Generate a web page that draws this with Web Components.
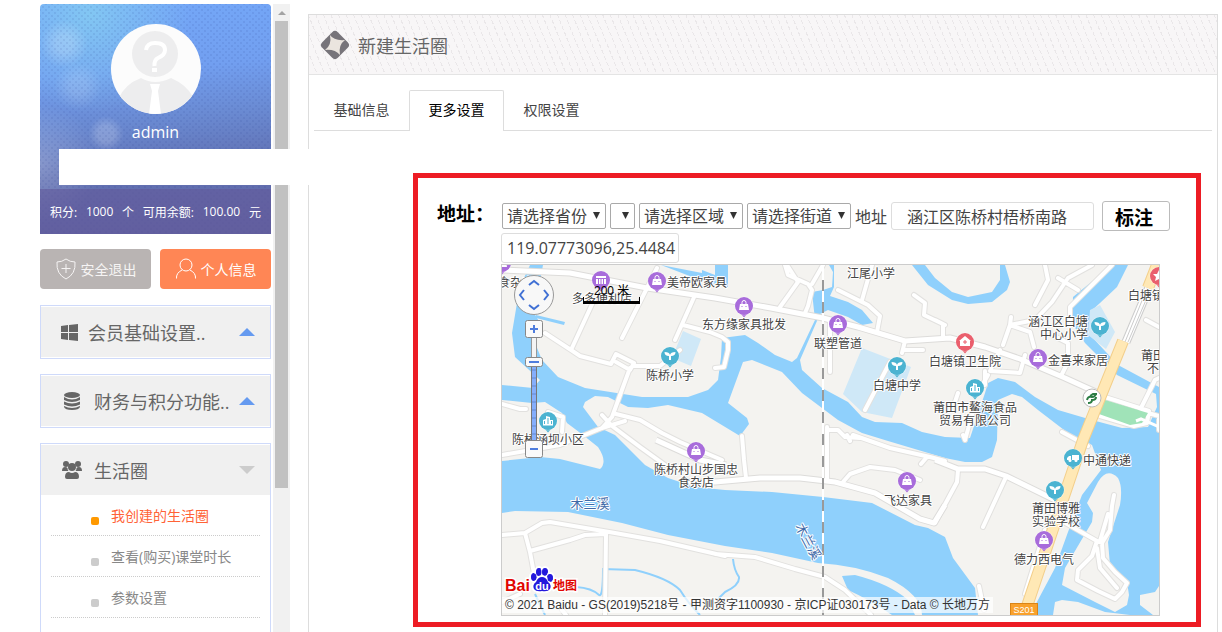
<!DOCTYPE html>
<html lang="zh-CN">
<head>
<meta charset="utf-8">
<title>新建生活圈</title>
<style>
html,body{margin:0;background:#fff}
body{font-family:"Open Sans","Noto Sans CJK SC",sans-serif;color:#333}
</style>
</head>
<body>
<app-shell>
  <side-bar slot="side">
    <profile-card name="admin" points="1000" balance="100.00"></profile-card>
    <quick-actions></quick-actions>
    <menu-panel label="会员基础设置.." icon="windows"></menu-panel>
    <menu-panel label="财务与积分功能.." icon="stack"></menu-panel>
    <menu-panel label="生活圈" icon="users" open>
      <menu-item current>我创建的生活圈</menu-item>
      <menu-item>查看(购买)课堂时长</menu-item>
      <menu-item>参数设置</menu-item>
    </menu-panel>
  </side-bar>
  <scroll-track slot="track"></scroll-track>
  <page-card heading="新建生活圈">
    <tab-strip></tab-strip>
    <address-form></address-form>
  </page-card>
</app-shell>

<script>
const define = (name, html, setup) => {
  const t = document.createElement('template');
  t.innerHTML = '<style>:host,*{box-sizing:border-box}</style>' + html.trim();
  customElements.define(name, class extends HTMLElement {
    constructor() {
      super();
      this.attachShadow({mode: 'open'}).append(t.content.cloneNode(true));
    }
    connectedCallback() { if (setup) setup(this, this.shadowRoot); }
  });
};

define('app-shell', `
<style>
:host{display:flex;position:relative;height:100vh;overflow:hidden;padding:0 4px 0 40px}
.side{flex:none;display:flex;padding-top:4px;gap:2px}
main{flex:1;min-width:0;margin-left:18px;padding-top:14px;display:flex}
::slotted(page-card){flex:1;min-width:0}
.blank{position:absolute;left:59px;top:149px;width:251px;height:36px;background:#fff}
</style>
<div class="side"><slot name="side"></slot><slot name="track"></slot></div>
<main><slot></slot></main>
<div class="blank"></div>`);

define('side-bar', `
<style>
:host{display:flex;flex-direction:column;width:231px;gap:15px}
::slotted(menu-panel){flex:none}
::slotted(menu-panel[open]){flex:1 0 auto}
::slotted(quick-actions){margin-bottom:1px}
</style><slot></slot>`);

define('profile-card', `
<style>
:host{display:flex;flex-direction:column;align-items:center;height:230px;border-radius:4px 4px 0 0;padding-top:20px;color:#fff;
background:
radial-gradient(circle,rgba(40,60,140,.1) 1px,transparent 1px) 0 0/6px 6px,
radial-gradient(circle,rgba(40,60,140,.1) 1px,transparent 1px) 3px 3px/6px 6px,
radial-gradient(circle at 24px 40px,rgba(255,255,255,.2) 0 8px,transparent 24px),
radial-gradient(circle at 38px 82px,rgba(255,255,255,.13) 0 8px,transparent 24px),
radial-gradient(circle at 66px 130px,rgba(255,255,255,.2) 0 8px,transparent 18px),
radial-gradient(circle at 0 160px,rgba(255,255,255,.22) 0,transparent 60px),
radial-gradient(circle at 50px 10px,rgba(140,220,240,.6) 0,transparent 100px),
linear-gradient(175deg,#6265a4 0,#6272b4 30%,#6a8ad2 50%,#729ff0 70%,#74a8f8 100%);
background:
radial-gradient(circle,rgba(40,60,140,.1) 1px,transparent 1px) 0 0/6px 6px,
radial-gradient(circle,rgba(40,60,140,.1) 1px,transparent 1px) 3px 3px/6px 6px,
radial-gradient(circle at 24px 40px,rgba(255,255,255,.2) 0 8px,transparent 24px),
radial-gradient(circle at 38px 82px,rgba(255,255,255,.13) 0 8px,transparent 24px),
radial-gradient(circle at 66px 130px,rgba(255,255,255,.2) 0 8px,transparent 18px),
radial-gradient(circle at 0 160px,rgba(255,255,255,.22) 0,transparent 60px),
radial-gradient(circle at 50px 10px,rgba(140,220,240,.6) 0,transparent 100px),
linear-gradient(175deg,#74a8f8 0,#729ff0 30%,#6a8ad2 50%,#6272b4 70%,#6265a4 100%)}
svg{display:block;flex:none;border-radius:50%}
.name{font-size:16px;line-height:36px}
.stats{margin-top:auto;width:100%;height:45px;display:flex;justify-content:space-between;align-items:center;padding:0 10px;background:rgba(98,90,155,.6);font-size:12px;white-space:nowrap}
</style>
<svg width="90" height="90" viewBox="0 0 90 90"><rect width="90" height="90" fill="#fcfcfc"/>
<circle cx="44" cy="30" r="23" fill="#ededee"/><path d="M8 74Q14 60 30 54Q44 62 60 54Q76 61 82 73L82 90H8z" fill="#ededee"/>
<path d="M35 26Q36 19 44 19Q54 19 54 26Q54 31 47 34Q43 36 43.500 42" fill="none" stroke="#fff" stroke-width="4"/><path d="M41 44h5v4h-5z" fill="#fff"/>
<path d="M39 60h10l-2 7 3 23H38l3-23z" fill="#fff"/></svg>
<div class="name"></div>
<div class="stats"><span>积分:</span><span class="p"></span><span>个</span><span>可用余额:</span><span class="b"></span><span>元</span></div>`,
(el, r) => {
  r.querySelector('.name').textContent = el.getAttribute('name');
  r.querySelector('.p').textContent = el.getAttribute('points');
  r.querySelector('.b').textContent = el.getAttribute('balance');
});

define('quick-actions', `
<style>
:host{display:flex;gap:9px}
button{flex:1;height:40px;border:0;border-radius:4px;padding:0;display:flex;align-items:center;justify-content:center;gap:4px;font:14px "Open Sans","Noto Sans CJK SC",sans-serif;color:#f6f4f4;background:#b9b4b3}
button+button{background:#ff8655;color:#fff}
svg{fill:none;stroke:currentColor;stroke-width:1}
</style>
<button type="button"><svg width="22" height="22" viewBox="0 0 22 22"><path d="M11 1Q15 4 20 4Q21 16 11 21Q1 16 2 4Q7 4 11 1zM11 6v9M6.500 10.500h9"/></svg>安全退出</button>
<button type="button"><svg width="22" height="22" viewBox="0 0 22 22"><circle cx="11" cy="7" r="6"/><path d="M7 12Q1 15 1.500 20.500M15 12Q21 15 20.500 20.500"/></svg>个人信息</button>`);

const menuIcons = {
  windows: '<path d="M1 4l7-1v7H1zM9 3l9-1v8H9zM1 11h7v7l-7-1zM9 11h9v8l-9-1z"/>',
  stack: '<ellipse cx="10" cy="4" rx="8" ry="3"/><path d="M2 6q8 5 16 0v3q-8 4-16 0zM2 10.500q8 4 16 0v3q-8 4-16 0zM2 15q8 4 16 0v1q-1 3-8 3t-8-3z"/>',
  users: '<circle cx="4" cy="4" r="3"/><circle cx="16" cy="4" r="3"/><circle cx="10" cy="7" r="4"/><path d="M0 11q0-4 3-4 2 0 2.500 1 0 2 1 3zM20 11q0-4-3-4-2 0-2.500 1 0 2-1 3zM3 17q0-5 4-5 3 2 6 0 4 0 4 5 0 2-2 2H5q-2 0-2-2z"/>'
};
define('menu-panel', `
<style>
:host{display:block;border:1px solid #cfdafa;padding:1px 0}
:host([open]){padding-bottom:0;border-bottom:0}
header{height:50px;background:#f0f0f0;display:flex;align-items:center;padding:0 15px 0 21px;font-size:18px;color:#666;white-space:nowrap}
:host([icon=windows]) header{padding-left:19px}
svg{flex:none;fill:#666;margin-right:12px}
:host([icon=windows]) svg{margin-right:8px}
i{margin-left:auto;border:8px solid transparent;border-top:0;border-bottom:8px solid #659af0}
:host([open]) i{border-top:8px solid #ccc;border-bottom:0}
nav{padding:0 10px}
</style>
<header><svg width="20" height="20" viewBox="0 0 20 20"></svg><span></span><i></i></header><nav><slot></slot></nav>`,
(el, r) => {
  r.querySelector('svg').innerHTML = menuIcons[el.getAttribute('icon')];
  r.querySelector('span').textContent = el.getAttribute('label');
});

define('menu-item', `
<style>
:host{display:block;border-bottom:1px dotted #ccc}
a{display:flex;align-items:center;height:40px;padding-left:40px;gap:12px;font-size:14px;color:#888;text-decoration:none}
a::before{content:"";width:8px;height:8px;border-radius:2px;background:#ccc;margin-top:12px}
:host([current]) a{color:#ff6337}
:host([current]) a::before{background:#f90}
</style><a href="#"><slot></slot></a>`);

define('scroll-track', `
<style>
:host{display:block;width:17px;background:#f1f1f1;padding:0 2px}
i{display:block;height:17px;padding:7px 3px}
i::before{content:"";display:block;border:4px solid transparent;border-top:0;border-bottom-color:#a3a3a3;width:0}
b{display:block;height:74.400%;background:#c1c1c1}
</style><i></i><b></b>`);

define('page-card', `
<style>
:host{display:block;border:1px solid #ddd;border-bottom:0}
header{height:60px;border-bottom:1px solid #e4e4e4;display:flex;align-items:center;gap:8px;padding-left:11px;
background:repeating-linear-gradient(0deg,#f8f6f7 0 2px,transparent 2px 6px),repeating-linear-gradient(68deg,#eae7e9 0 1px,#f8f6f7 1px 7px)}
h1{margin:0;font-size:18px;font-weight:400;color:#666}
</style>
<header><svg width="30" height="30" viewBox="0 0 30 30"><rect x="4" y="4" width="22" height="22" rx="4" transform="rotate(45 15 15)" fill="#77747a"/><path d="M10 5Q14 11 25 10Q18 15 20 25Q15 19 5 20Q12 15 10 5z" fill="#ebe5df"/></svg><h1></h1></header><slot></slot>`,
(el, r) => r.querySelector('h1').textContent = el.getAttribute('heading'));

define('tab-strip', `
<style>
:host{display:flex;margin:15px 5px 0;border-bottom:1px solid #ddd;height:41px}
button{font:14px "Open Sans","Noto Sans CJK SC",sans-serif;width:95px;padding:0 0 4px;border:1px solid transparent;border-bottom:0;background:none;color:#444}
button[aria-selected=true]{border-color:#ddd;border-radius:2px 2px 0 0;background:#fff;color:#000;margin-bottom:-1px;padding-bottom:5px}
</style>
<button role="tab" aria-selected="false">基础信息</button><button role="tab" aria-selected="true">更多设置</button><button role="tab" aria-selected="false">权限设置</button>`);

define('address-form', `
<style>
:host{display:grid;grid-template-columns:64px minmax(0,1fr);margin:42px 16px 0 104px;border:5px solid #ed1c24;padding:23px 36px 6px 19px;font-size:16px;color:#444}
.title{font:bold 19px/28px "Liberation Serif","Noto Sans CJK SC",serif;color:#000;white-space:nowrap}
.row{display:flex;align-items:center;gap:4px;height:30px;margin-right:-20px;padding-left:1px}
.pick{position:relative;flex:none}
.pick::after{content:"";position:absolute;right:6px;top:9px;width:7px;height:7px;background:#333;clip-path:polygon(0 0,100% 0,50% 100%);pointer-events:none}
select{appearance:none;display:block;width:104px;height:26px;border:1px solid #a9a9a9;border-radius:2px;padding:0 4px;background:#fff;color:#444;font:16px "Open Sans","Noto Sans CJK SC",sans-serif}
.city{width:25px}
input{height:28px;border:1px solid #ddd;border-radius:3px;font:16px "Open Sans","Noto Sans CJK SC",sans-serif;color:#444;background:#fff}
#street{width:203px;padding:0 15px}
#point{display:block;width:178px;height:30px;padding:0 0 0 5px;margin:2px 0 1px}
button{width:68px;height:30px;margin-left:4px;padding:0 4px 0 0;border:1px solid #bbb;border-radius:3px;background:#fff;color:#000;font:bold 19px "Noto Sans CJK SC",sans-serif}
</style>
<div class="title">地址：</div>
<div>
<div class="row">
<span class="pick"><select aria-label="省份"><option>请选择省份</option></select></span>
<span class="pick"><select class="city" aria-label="城市"><option></option></select></span>
<span class="pick"><select aria-label="区域"><option>请选择区域</option></select></span>
<span class="pick"><select aria-label="街道"><option>请选择街道</option></select></span>
<label for="street">地址</label><input id="street" value="涵江区陈桥村梧桥南路">
<button type="button">标注</button>
</div>
<input id="point" aria-label="坐标" value="119.07773096,25.4484">
<city-map></city-map>
</div>`);

const glyphs = {
  bag: '<path d="M6 8h8l1 6H5z" fill="#fff"/><path d="M8 8V6.500a2 2 0 0 1 4 0V8" fill="none" stroke="#fff" stroke-width="1"/><path d="M7.500 10h1v1h-1zM11.500 10h1v1h-1z" fill="#a86cdb"/>',
  leaf: '<path d="M4.500 6q5 0 5.500 3 .5-3 5.500-3 0 4-4.500 4v4H9v-4q-4.500 0-4.500-4z" fill="#fff"/>',
  home: '<path d="M10 4l6 5h-1v5H5V9H4z" fill="#fff"/><path d="M10 8v4M8 10h4" stroke="#ea5f6d"/>',
  city: '<path d="M5 14.500V9l3-1V5l4 1v3h3v5.500z" fill="#fff"/><path d="M9 8h2M9 10h2M9 12h2M6.500 10v3M13.500 10v3" stroke="#4bb3d1"/>',
  truck: '<path d="M4 10l2-2h2v4H4zM9 7h7v5H9z" fill="#fff"/><circle cx="7" cy="12.500" r="1.500" fill="#fff"/><circle cx="13" cy="12.500" r="1.500" fill="#fff"/>',
  mall: '<path d="M5 6h10v2H5zM5 9h10v5H5z" fill="#fff"/><path d="M7.500 9v5M10 9v5M12.500 9v5" stroke="#a86cdb"/>',
  star: '<path d="M10 4l2 4h4l-3 3 1 4-4-2-4 2 1-4-3-3h4z" fill="#fff"/>'
};
const tones = {bag: '#a86cdb', mall: '#a86cdb', leaf: '#4bb3d1', city: '#4bb3d1', truck: '#4bb3d1', home: '#ea5f6d', star: '#ea5f6d'};
define('map-pin', `
<style>:host{position:absolute;width:20px;height:22px;margin:-10px 0 0 -10px}svg{display:block}</style><svg width="20" height="22" viewBox="0 0 20 22"></svg>`,
(el, r) => {
  const k = el.getAttribute('kind');
  r.querySelector('svg').innerHTML = `<path d="M6 17h8l-4 4.500z" fill="${tones[k]}"/><circle cx="10" cy="10" r="9.500" fill="#fff" opacity=".5"/><circle cx="10" cy="10" r="9" fill="${tones[k]}"/>${glyphs[k]}`;
});
define('map-label', `
<style>:host{position:absolute;margin-top:-1px;transform:translate(-50%,-50%);font:12px/13px "Noto Sans CJK SC",sans-serif;color:#444;white-space:pre;text-align:center;text-shadow:1px 0 #fff,-1px 0 #fff,0 1px #fff,0 -1px #fff,1px 1px #fff,-1px -1px #fff}
:host([water]){color:#3e69a8;font-size:13px}
:host([end]){text-align:right}
:host([tilt]){transform:translate(-50%,-50%) rotate(62deg)}
</style><slot></slot>`);

const pins = [['mall',601,280],['bag',657,281],['bag',744,306],['leaf',670,356],['city',548,421],['bag',838,324],['leaf',897,366],['home',965,342],['bag',1038,358],['leaf',1100,326],['city',975,388],['bag',696,451],['bag',907,481],['truck',1073,458],['leaf',1055,490],['bag',1044,540],['star',1159,276],['bag',502,263]];
const labels = [['食杂店',516,282],['多多便利店',602,298],['美帝欧家具',697,282],['东方缘家具批发',744,324],['陈桥小学',670,375],['陈桥涵坝小区',548,439],['江尾小学',871,273],['联塑管道',838,343],['白塘中学',897,385],['白塘镇卫生院',965,361],['金喜来家居',1078,360],['涵江区白塘\n中心小学',1058,328,'end'],['白塘镇',1146,295],['莆田\n不',1153,362],['莆田市鳌海食品\n贸易有限公司',975,414],['陈桥村山步国忠\n食杂店',696,476],['飞达家具',908,500],['中通快递',1107,460],['莆田博雅\n实验学校',1056,515],['德力西电气',1044,559],['木兰溪',590,503,'water'],['木兰溪',809,542,'water tilt']];

define('city-map', `
<style>
:host{display:block;position:relative;height:352px;border:1px solid #ccc;background:#f4f3f0;overflow:hidden}
.base{display:block}
.ctl{position:absolute;left:11px;top:8px}
.logo{position:absolute;left:2px;top:299px}
.scale{position:absolute;left:81px;top:20px;width:57px;height:19px;border:1px solid #000;border-top:0;border-bottom-width:3px;clip-path:inset(12px 0 0 0)}
.dist{position:absolute;left:92px;top:18px;font:12px/16px "Liberation Sans","Noto Sans CJK SC",sans-serif;color:#000}
.copy{position:absolute;left:0;top:332px;padding:0 3px;background:rgba(255,255,255,.7);font:12px/16px "Liberation Sans","Noto Sans CJK SC",sans-serif;color:#333;white-space:nowrap}
</style>
<svg class="base" width="657" height="350" viewBox="502 265 657 350">
<defs>
<path id="minor" d="M657 268L622 338M594 300L571 350M502 404L520 409L526 409M545 333L571 350L580 356L611 364L616 354L634 363L630 370L616 362M630 368L612 417L602 428L560 445L502 455M634 366L660 366L680 350M695 295L675 340M683 325L710 332L722 337L728 342L728 350L724 367L715 368M548 412L563 417L562 432M602 415L612 426L640 447L665 465M602 428L625 421M616 414L640 420L662 433L680 442L722 460M785 265L788 275L808 284L812 290L808 306L805 313M787 265L798 282L780 307M823 265L812 284M838 290L868 305L880 316L877 332M862 300L872 265M830 320L830 372M905 341L902 353M890 362L865 410M905 350L923 350M914 295L925 303L924 315L945 325M935 320L943 324L943 338M1045 265L1048 280L1035 305M1092 265L1068 278L1052 302L1035 320L1010 325L1003 345M1058 278L1078 290M1112 265L1082 295L1070 307L1070 320M1011 317L1010 325M1010 325L1030 332L1034 347M1025 355L1020 373L990 371L1000 350M988 375L978 393M958 393L955 402M985 371L985 385M965 440L972 415M1052 335L1068 343L1068 362L1062 374M1105 397L1149 411L1147 423L1134 426L1100 416M1141 411L1159 416L1159 430M1141 408L1155 380L1159 378M1146 320L1159 327M742 436L744 460L746 478M827 427L827 480M827 470L827 430L838 430L845 437L860 438M843 482L850 474L870 467L895 470L920 480M847 435L850 441M853 435L890 448L930 457L945 461M927 457L921 464M963 435L965 440M1062 432L1088 446M1060 520L1097 541M1097 541L1092 556L1078 570L1077 580L1098 591L1115 599L1122 592L1127 583L1115 572L1103 558L1102 543L1097 541M1102 543L1110 530L1112 506L1114 495M1108 514L1100 541M1097 548L1100 568L1117 588M1025 594L1045 530M979 586L984 610M958 470L957 482L935 523M502 535L525 533L542 523L550 522L615 533L660 541L725 556M525 533L530 552L537 590M530 551L570 540L585 535L606 534M606 534L605 615M1006 477L983 527M715 554L755 557L795 569L825 577L845 590L871 615M502 602L520 594M562 610L566 615"/>
<path id="major" d="M502 270L570 273L647 288L715 298L771 308L823 318L858 327L905 341L950 338L985 347L1020 359L1065 378L1098 393M656 440L700 460L726 465M680 482L715 482L760 478L800 478L835 482L875 493L920 519L934 523L945 505M935 460L958 469L985 469L1006 476L1055 500"/>
</defs>
<g fill="#8fd0fc">
<path d="M530 265H543L534 313L540 323L535 343L542 360L558 377L585 388L642 397L688 397L708 390L718 380L721 357L722 338L745 335L758 343L775 355L792 362L797 358L815 320L812 292L823 290L832 287L833 272L829 265H834L834 287L830 296L848 302L862 310L873 323L862 325L848 317L828 310L820 314L800 360L802 370L822 388L848 402L862 417L875 422L902 423L922 432L945 437L970 438L985 393L988 383L998 378L1015 382L1035 397L1058 410L1092 420L1122 428L1148 427L1157 407L1156 394L1117 375L1085 343L1072 323L1073 297L1112 265H1128L1117 287L1100 303L1090 312L1092 337L1118 365L1159 387V615H1130L1105 612L1078 602L1062 600L1055 602L1053 615H1030L1055 568L1068 532L1082 495L1101 470L1092 445L1068 433L1038 410L1022 397L1012 394L998 400L997 440L992 457L982 462L965 462L945 458L888 441L862 433L838 420L802 393L782 372L752 360L743 362L728 403L747 418L749 424L740 436L702 413L668 405L648 408L628 407L608 397L595 396L585 402L583 407L598 427L615 435L645 465L668 478L695 487L725 490L772 492L823 497L872 503L915 525L928 528L945 537L953 558L975 588L978 615H922Q922 595 888 578Q855 565 818 563L772 553L725 546L668 535L622 523L568 512L515 511L502 513V461L540 457L560 459L600 469Q608 462 598 447L583 435L567 423L562 413L545 402L532 403L502 400V385L533 388L540 380L515 357L512 333L517 303L523 280z"/>
<path d="M912 265L928 285L952 300L968 304L992 302L1007 290L1010 282L1005 265H1000L1000 280L992 292L968 297L952 292L935 278L925 265zM842 576L855 575Q890 584 908 600L915 615H892Q870 600 848 590zM661 265L702 273V270L715 275V265H728V287L700 280zM716 265H728V282H716zM536 315L565 322L564 325L536 318z"/>
</g>
<path d="M576 587Q592 588 599 595Q603 598 603 569L635 570Q668 578 680 590Q688 603 700 615M733 559Q734 570 739 577Q740 585 725 592L718 599M535 594L545 615" fill="none" stroke="#8fd0fc" stroke-width="2"/>
<g fill="#f4f3f0"><path d="M1062 585L1065 568L1092 522L1093 513L1087 503L1098 482Q1107 467 1118 478Q1123 487 1120 505L1108 542L1110 565L1127 582L1129 595L1127 605L1115 612L1095 602zM1140 595L1155 592L1159 586V615H1153L1140 605z"/></g>
<path d="M683 331L701 339L691 366L672 358zM862 348L911 367L892 418L862 412L843 394zM1090 310L1100 305L1115 332L1106 349L1088 335z" fill="#cfe8f7"/>
<use href="#minor" fill="none" stroke="#e2e1df" stroke-width="6" stroke-linejoin="round" stroke-linecap="round"/><use href="#major" fill="none" stroke="#dddcda" stroke-width="7" stroke-linejoin="round"/>
<use href="#minor" fill="none" stroke="#fff" stroke-width="4" stroke-linejoin="round" stroke-linecap="round"/><use href="#major" fill="none" stroke="#fff" stroke-width="5" stroke-linejoin="round"/>
<path d="M1105 400L1148 413L1142 423L1130 425L1099 414z" fill="#a0e3b8"/><path d="M1136 421l5-2 18 8" fill="none" stroke="#fff" stroke-width="3"/>
<path d="M1126 342L1150 285" stroke="#ccc" stroke-width="9"/><path d="M1126 342L1150 285" stroke="#fff" stroke-width="7"/><path d="M1125 342L1148 286M1128 342L1152 286" stroke="#ccc" stroke-width="1"/>
<path d="M1123 341L1083 440L1024 615M1148 288L1157 265" fill="none" stroke="#f3cf8b" stroke-width="12"/><path d="M1123 341L1083 440L1024 615M1148 288L1157 265" fill="none" stroke="#ffe8b5" stroke-width="10"/>
<path d="M823 265V615" stroke="#fff" stroke-width="2"/><path d="M823 280V615" stroke="#999" stroke-width="2" stroke-dasharray="11 11"/>
<circle cx="1092" cy="398" r="9" fill="#fff" stroke="#bbb"/><path d="M1087 400q1-4 5-3 3 0 4-3M1088 403q4 0 4-3 4 0 4-3M1090 396l3-2h4" fill="none" stroke="#2c7d44" stroke-width="2"/>
<rect x="1010.500" y="603.500" width="27" height="14" fill="#f9a12c" stroke="#d98417"/><text x="1024" y="613" fill="#fff" font-family="Liberation Sans" font-size="9" text-anchor="middle">S201</text>
</svg>
<div class="pois"></div>
<svg class="ctl" width="42" height="188" viewBox="513 273 42 188">
<circle cx="534" cy="295" r="19.500" fill="#f8f8f8" stroke="#999"/><path d="M529 285l5-4 5 4M529 305l5 4 5-4M524 290l-4 5 4 5M544 290l4 5-4 5" fill="none" stroke="#4070d4" stroke-width="2"/>
<rect x="531.500" y="336" width="5" height="26" fill="#f4f4f4" stroke="#999"/><rect x="531.500" y="362" width="5" height="80" fill="#85aefb" stroke="#777"/><path d="M532 370h4M532 378h4M532 386h4M532 394h4M532 402h4M532 410h4M532 418h4M532 426h4M532 434h4" stroke="#6489d0"/>
<g fill="#fafafa" stroke="#888"><rect x="525.500" y="320.500" width="17" height="17" rx="2"/><rect x="525.500" y="357.500" width="17" height="9" rx="2"/><rect x="525.500" y="440.500" width="17" height="17" rx="2"/></g>
<path d="M530 329h8M534 325v8M529 362h10M530 449h8" stroke="#4f7ddd" stroke-width="2"/></svg>
<div class="scale"></div><div class="dist">200 米</div>
<svg class="logo" width="76" height="32" viewBox="504 564 76 32">
<g stroke="#fff" stroke-width="4" stroke-linejoin="round" paint-order="stroke" fill="#2419dc"><ellipse cx="534" cy="577" rx="3" ry="4"/><ellipse cx="539" cy="572" rx="3" ry="4"/><ellipse cx="545" cy="572" rx="3" ry="4"/><ellipse cx="550" cy="578" rx="3" ry="4"/><path d="M542 577q4 0 6 5 4 3 2 7-2 3-8 2-6 1-8-2-2-4 2-7 2-5 6-5z"/></g>
<g font-family="Liberation Sans" font-weight="700" paint-order="stroke" stroke="#fff" stroke-width="3"><text x="505" y="591" font-size="16" fill="#e10601">Bai</text><text x="553" y="590" font-size="12" fill="#e10601" font-family="Noto Sans CJK SC">地图</text></g>
<g fill="#2419dc"><ellipse cx="534" cy="577" rx="2.500" ry="3.500"/><ellipse cx="539" cy="572" rx="2.500" ry="3.500"/><ellipse cx="545" cy="572" rx="2.500" ry="3.500"/><ellipse cx="550" cy="578" rx="2.500" ry="3.500"/></g>
<text x="542" y="590" font-size="11" font-weight="700" fill="#fff" font-family="Liberation Sans" text-anchor="middle">du</text></svg>
<div class="copy">© 2021 Baidu - GS(2019)5218号 - 甲测资字1100930 - 京ICP证030173号 - Data © 长地万方</div>`,
(el, r) => {
  const at = (x, y) => `style="left:${x - 502}px;top:${y - 265}px"`;
  r.querySelector('.pois').innerHTML =
    pins.map(([k, x, y]) => `<map-pin kind="${k}" ${at(x, y)}></map-pin>`).join('') +
    labels.map(([t, x, y, a = '']) => `<map-label ${a} ${at(x, y)}>${t}</map-label>`).join('');
});
</script>
</body>
</html>
